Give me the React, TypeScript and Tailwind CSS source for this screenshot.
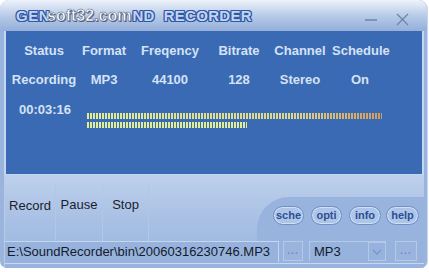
const labels = ['Status', 'Format', 'Freqency', 'Bitrate', 'Channel', 'Schedule'];
const values = ['Recording', 'MP3', '44100', '128', 'Stereo', 'On'];

const pills = [
  { text: 'sche', w: 'w-[31px]', ml: 'ml-0' },
  { text: 'opti', w: 'w-[31px]', ml: 'ml-[7px]' },
  { text: 'info', w: 'w-[32px]', ml: 'ml-[7px]' },
  { text: 'help', w: 'w-[33px]', ml: 'ml-[5px]' },
];

const outline =
  '[text-shadow:1px_0_0_#2f58a6,-1px_0_0_#2f58a6,0_1px_0_#2f58a6,0_-1px_0_#2f58a6,1px_1px_0_#2f58a6,-1px_-1px_0_#2f58a6,1px_-1px_0_#2f58a6,-1px_1px_0_#2f58a6]';

const Dots = ({ w }: { w: string }) => (
  <div className={`${w} h-[20px] border border-[#b4c8e8] bg-[#9ab4de] flex items-end justify-center pb-[4px]`}>
    <span className="text-[10px] leading-none font-bold text-[#6f90c8] tracking-[1px]">...</span>
  </div>
);

export default function App() {
  return (
    <div className="w-[429px] h-[272px] bg-white overflow-hidden font-['Liberation_Sans',Arial,sans-serif]">
      <div className="w-[428px] h-[268px] rounded-t-[9px] rounded-b-[7px] bg-[#9ab4de] border-r border-[#c8d8ee] flex flex-col overflow-hidden">
        {/* title bar */}
        <div className="h-[31px] flex items-center pl-[16px] pr-[18px] bg-gradient-to-b from-[#eef3fa] via-[#b8cbe8] to-[#94afda]">
          <div className="flex items-center pt-[1px] whitespace-nowrap">
            <span className={`text-[15px] font-bold text-[#c2d4f0] tracking-[0.5px] ${outline}`}>GEN</span>
            <span className="ml-[-3px] text-[16px] font-bold text-white [-webkit-text-stroke:0.5px_#4a5a78] [text-shadow:1px_1px_0_#5a6680]">soft32.com</span>
            <span className={`ml-[1px] text-[15px] font-bold text-[#c2d4f0] tracking-[0.3px] ${outline}`}>ND&nbsp;&nbsp;RECORDER</span>
          </div>
          <div className="ml-auto flex items-center">
            <svg width="14" height="14" viewBox="0 0 14 14" className="mt-[8px]">
              <line x1="1" y1="7" x2="13" y2="7" stroke="#6e84a8" strokeWidth="1.5" />
            </svg>
            <svg width="13" height="13" viewBox="0 0 13 13" className="ml-[18px] mt-[7px]">
              <line x1="1" y1="1" x2="12" y2="12" stroke="#6e84a8" strokeWidth="1.2" />
              <line x1="12" y1="1" x2="1" y2="12" stroke="#6e84a8" strokeWidth="1.2" />
            </svg>
          </div>
        </div>

        {/* status panel */}
        <div className="ml-[4px] w-[420px] h-[144px] bg-[#3b6ab4] border-l-2 border-r-2 border-b border-[#c4d6f0] pl-[4px] pt-[12px] text-[13px] font-bold leading-[16px] text-[#d4e2f6]">
          <div className="grid grid-cols-[68px_52px_80px_58px_64px_56px] whitespace-nowrap">
            {labels.map((l) => (
              <div key={l} className="text-center">{l}</div>
            ))}
          </div>
          <div className="grid grid-cols-[68px_52px_80px_58px_64px_56px] whitespace-nowrap mt-[13px]">
            {values.map((v) => (
              <div key={v} className="text-center">{v}</div>
            ))}
          </div>
          <div className="flex items-start mt-[14px]">
            <div className="ml-[9px] w-[68px]">00:03:16</div>
            <div className="mt-[11px] flex flex-col gap-[3px]">
              <div className="w-[295px] h-[6px] bg-gradient-to-r from-[#e2ee94] via-[#dcd68a] via-70% to-[#d29a5a]">
                <div className="w-full h-full bg-[repeating-linear-gradient(90deg,transparent_0_2px,#3b6ab4_2px_3px)]" />
              </div>
              <div className="w-[160px] h-[6px] bg-[#e2ee94]">
                <div className="w-full h-full bg-[repeating-linear-gradient(90deg,transparent_0_2px,#3b6ab4_2px_3px)]" />
              </div>
            </div>
          </div>
        </div>

        {/* lower controls */}
        <div className="ml-[4px] w-[420px] flex-1 flex flex-col bg-gradient-to-b from-[#bed0ec] via-[#a8c0e4] to-[#97b3dd] border-l border-[#b8cce8]">
          <div className="h-[66px] flex">
            <div className="flex mt-[8px] text-[13px] text-[#1a1e2c]">
              <div className="w-[51px] border-r border-[#b2c6e6] flex items-center justify-center pb-[12px]">Record</div>
              <div className="w-[47px] border-r border-[#b2c6e6] flex items-center justify-center pb-[14px]">Pause</div>
              <div className="w-[46px] border-r border-[#b2c6e6] flex items-center justify-center pb-[14px]">Stop</div>
            </div>
            <div className="flex-1 flex flex-col">
              <div className="h-[22px]" />
              <div className="flex-1 ml-[108px] rounded-tl-[32px] bg-[#98b4de] flex items-start justify-end pt-[9px] pr-[5px]">
                {pills.map((p) => (
                  <div
                    key={p.text}
                    className={`${p.w} ${p.ml} h-[19px] rounded-full bg-[#aec5ea] border border-[#6f90c8] shadow-[inset_0_0_0_1px_#d2e0f4] flex items-center justify-center text-[11px] font-bold text-[#2d4f92]`}
                  >
                    {p.text}
                  </div>
                ))}
              </div>
            </div>
          </div>
          <div className="h-[22px] flex items-start bg-[#97b3dd]">
            <div className="w-[274px] h-[21px] border-t border-r border-[#c6d6ee] pl-[2px] flex items-center text-[13px] text-[#141a2c] whitespace-nowrap overflow-hidden">
              E:\SoundRecorder\bin\20060316230746.MP3
            </div>
            <div className="ml-[4px]"><Dots w="w-[20px]" /></div>
            <div className="ml-[6px] w-[77px] h-[20px] border-t border-l border-[#b4c8e8] flex items-center">
              <span className="pl-[4px] text-[13px] text-[#141a2c] flex-1">MP3</span>
              <div className="w-[18px] h-[19px] border border-[#b4c8e8] flex items-center justify-center">
                <svg width="10" height="6" viewBox="0 0 10 6">
                  <polyline points="1,1 5,5 9,1" fill="none" stroke="#7496cc" strokeWidth="1.3" />
                </svg>
              </div>
            </div>
            <div className="ml-[9px]"><Dots w="w-[22px]" /></div>
          </div>
          <div className="flex-1 border-t border-[#c8d8ee]" />
        </div>
      </div>
    </div>
  );
}
